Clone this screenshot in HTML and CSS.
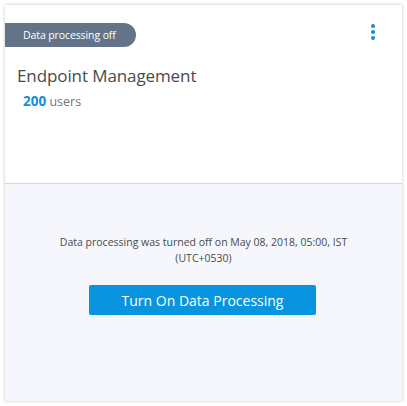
FILE: index.html
```html
<!DOCTYPE html>
<html>
<head>
<meta charset="utf-8">
<link rel="stylesheet" href="styles.css">
</head>
<body>
<div class="card">
  <div class="top">
    <div class="head">
      <span class="badge">Data processing off</span>
      <span class="menu"><i></i><i></i><i></i></span>
    </div>
    <div class="title">Endpoint Management</div>
    <div class="users"><b>200</b> users</div>
  </div>
  <div class="bottom">
    <p class="msg">Data processing was turned off on May 08, 2018, 05:00, IST<br>(UTC+0530)</p>
    <button class="btn">Turn On Data Processing</button>
  </div>
</div>
</body>
</html>
```
FILE: styles.css
```css
html, body { margin: 0; padding: 0; background: #fff; }
body { padding: 5px; font-family: "Open Sans", "Noto Sans", sans-serif; }
.card {
  width: 397px;
  height: 396px;
  box-sizing: border-box;
  display: flex;
  flex-direction: column;
  background: #fff;
  box-shadow: 0 0 3px rgba(0,0,0,0.25);
}
.top {
  height: 179px;
  flex: none;
  padding-top: 18px;
  box-sizing: border-box;
  border-bottom: 1px solid #c6dcea;
}
.head { display: flex; justify-content: space-between; align-items: flex-start; }
.badge {
  display: inline-block;
  height: 24px;
  line-height: 24px;
  padding: 0 20px 0 18px;
  background: #647488;
  color: #fff;
  font-size: 10.5px;
  border-radius: 0 12px 12px 0;
  letter-spacing: -0.1px;
}
.menu { display: flex; flex-direction: column; gap: 2px; padding: 1px 27px 0 0; }
.menu i { display: block; width: 4px; height: 4px; border-radius: 50%; background: #0f8fd8; }
.title { font-size: 17px; color: #4a4a4a; margin: 17px 0 0 12px; line-height: 24px; letter-spacing: -0.1px; }
.users { margin: 3px 0 0 18px; font-size: 12.5px; color: #757575; line-height: 20px; }
.users b { color: #0f8fd8; font-weight: 700; font-size: 13.5px; }
.bottom {
  flex: 1;
  background: #f5f7fc;
  display: flex;
  flex-direction: column;
  align-items: center;
  padding-top: 50px;
}
.msg { margin: 0; font-size: 10.5px; line-height: 16px; color: #4a4a4a; text-align: center; }
.btn {
  margin-top: 19px;
  width: 227px;
  height: 30px;
  border: 0;
  border-radius: 2px;
  background: #0994df;
  color: #fff;
  font-family: "Open Sans", "Noto Sans", sans-serif;
  font-size: 14px;
  padding: 0;
  margin-left: -2px;
}
```
